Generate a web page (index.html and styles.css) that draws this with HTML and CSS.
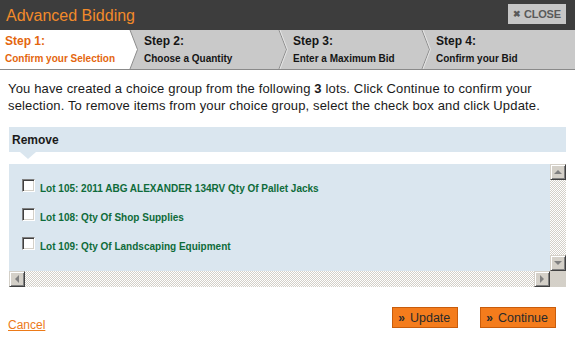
FILE: index.html
```html
<!DOCTYPE html>
<html>
<head>
<meta charset="utf-8">
<link rel="stylesheet" href="styles.css">
</head>
<body>
<div class="dialog">
  <div class="titlebar">
    <span class="title">Advanced Bidding</span>
    <span class="close"><span class="x">✖</span> CLOSE</span>
  </div>
  <div class="steps">
    <div class="step step1 active"><div class="st">Step 1:</div><div class="sd">Confirm your Selection</div></div>
    <svg class="chev chev-first" width="10" height="39" viewBox="0 0 10 39"><polygon points="0,0 1,0 8.5,19.5 1,39 0,39" fill="#fff"/><polyline points="1,0 8.5,19.5 1,39" fill="none" stroke="#8c8c8c" stroke-width="1"/></svg>
    <div class="step step2"><div class="st">Step 2:</div><div class="sd">Choose a Quantity</div></div>
    <svg class="chev" width="10" height="39" viewBox="0 0 10 39"><polyline points="1,0 8.5,19.5 1,39" fill="none" stroke="#8c8c8c" stroke-width="1"/><polyline points="2,0 9.5,19.5 2,39" fill="none" stroke="#e4e4e4" stroke-width="1"/></svg>
    <div class="step step3"><div class="st">Step 3:</div><div class="sd">Enter a Maximum Bid</div></div>
    <svg class="chev" width="10" height="39" viewBox="0 0 10 39"><polyline points="1,0 8.5,19.5 1,39" fill="none" stroke="#8c8c8c" stroke-width="1"/><polyline points="2,0 9.5,19.5 2,39" fill="none" stroke="#e4e4e4" stroke-width="1"/></svg>
    <div class="step step4"><div class="st">Step 4:</div><div class="sd">Confirm your Bid</div></div>
  </div>
  <p class="intro">You have created a choice group from the following <b>3</b> lots. Click Continue to confirm your selection. To remove items from your choice group, select the check box and click Update.</p>
  <div class="remove-head">Remove</div>
  <div class="list">
    <div class="list-body">
      <div class="row"><span class="cb"></span><span class="lot">Lot 105: 2011 ABG ALEXANDER 134RV Qty Of Pallet Jacks</span></div>
      <div class="row"><span class="cb"></span><span class="lot">Lot 108: Qty Of Shop Supplies</span></div>
      <div class="row"><span class="cb"></span><span class="lot">Lot 109: Qty Of Landscaping Equipment</span></div>
    </div>
    <div class="vscroll">
      <span class="sbtn"><span class="arr up"></span></span>
      <span class="track"></span>
      <span class="sbtn"><span class="arr down"></span></span>
    </div>
    <div class="hscroll">
      <span class="sbtn"><span class="arr left"></span></span>
      <span class="track"></span>
      <span class="sbtn"><span class="arr right"></span></span>
    </div>
    <div class="corner"></div>
  </div>
  <div class="footer">
    <a class="cancel" href="#">Cancel</a>
    <div class="buttons">
      <span class="btn"><b>»</b>Update</span>
      <span class="btn"><b>»</b>Continue</span>
    </div>
  </div>
</div>
</body>
</html>
```
FILE: styles.css
```css
html, body {
  margin: 0;
  padding: 0;
  background: #fff;
}
body {
  font-family: "Liberation Sans", Arial, sans-serif;
  width: 575px;
  height: 337px;
  overflow: hidden;
}
.titlebar {
  height: 30px;
  background: #3d3d3d;
  display: flex;
  align-items: center;
  justify-content: space-between;
  padding: 0 9px 0 6px;
}
.title {
  color: #f28a2a;
  font-size: 16px;
  margin-top: 1px;
}
.close {
  background: #c6c6c6;
  color: #5a5a5a;
  font-size: 11px;
  font-weight: bold;
  height: 20px;
  width: 58px;
  display: flex;
  align-items: center;
  justify-content: center;
  margin-top: -2px;
  letter-spacing: -0.2px;
}
.close .x {
  font-size: 9px;
  margin-right: 3px;
}
.steps {
  height: 39px;
  display: flex;
  background: #c9c9c9;
  border-bottom: 1px solid #8a8a8a;
}
.chev {
  flex: none;
  display: block;
}
.step {
  padding: 3px 0 0 5px;
  color: #151515;
  font-weight: bold;
  box-sizing: border-box;
}
.step1 { width: 129px; background: #fff; }
.step2 { width: 139px; }
.step3 { width: 133px; }
.step4 { flex: 1; }
.step.active { color: #e4660e; }
.st {
  font-size: 12px;
  line-height: 17px;
}
.sd {
  font-size: 10px;
  line-height: 12px;
  margin-top: 3px;
  white-space: nowrap;
}
.intro {
  margin: 10px 8px 0;
  font-size: 13px;
  letter-spacing: 0.15px;
  line-height: 17px;
  color: #1a1a1a;
}
.remove-head {
  position: relative;
  margin: 13px 9px 0;
  height: 25px;
  background: #dae6ef;
  font-size: 12px;
  font-weight: bold;
  color: #1a1a1a;
  padding-left: 3px;
  line-height: 26px;
}
.remove-head::after {
  content: "";
  position: absolute;
  left: 11px;
  bottom: -7px;
  border-left: 8px solid transparent;
  border-right: 8px solid transparent;
  border-top: 7px solid #dae6ef;
}
.list {
  margin: 12px 9px 0;
  height: 123px;
  display: grid;
  grid-template-columns: 1fr 16px;
  grid-template-rows: 1fr 16px;
}
.list-body {
  background: #dae6ef;
  padding: 10px 0 0 13px;
}
.row {
  height: 29px;
  display: flex;
  align-items: center;
}
.cb {
  width: 11px;
  height: 11px;
  background: #fff;
  border: 1px solid;
  border-color: #808080 #fff #fff #808080;
  box-shadow: inset 1px 1px #404040, inset -1px -1px #d4d0c8;
  margin-right: 5px;
  margin-top: -6px;
  flex: none;
}
.lot {
  color: #0e6b3a;
  font-size: 10px;
  font-weight: bold;
  white-space: nowrap;
}
.vscroll {
  display: flex;
  flex-direction: column;
}
.hscroll {
  display: flex;
}
.track {
  flex: 1;
  background: repeating-conic-gradient(#d4d0c8 0 25%, #fff 0 50%) 0 0 / 2px 2px;
}
.sbtn {
  width: 16px;
  height: 16px;
  box-sizing: border-box;
  background: #d4d0c8;
  border: 1px solid;
  border-color: #d4d0c8 #404040 #404040 #d4d0c8;
  box-shadow: inset 1px 1px #fff, inset -1px -1px #808080;
  display: flex;
  align-items: center;
  justify-content: center;
  flex: none;
}
.arr {
  width: 0;
  height: 0;
}
.arr.up { border-left: 4px solid transparent; border-right: 4px solid transparent; border-bottom: 4px solid #808080; }
.arr.down { border-left: 4px solid transparent; border-right: 4px solid transparent; border-top: 4px solid #808080; }
.arr.left { border-top: 4px solid transparent; border-bottom: 4px solid transparent; border-right: 4px solid #808080; }
.arr.right { border-top: 4px solid transparent; border-bottom: 4px solid transparent; border-left: 4px solid #808080; }
.corner {
  background: #d4d0c8;
}
.footer {
  display: flex;
  justify-content: space-between;
  align-items: flex-start;
  padding: 20px 19px 0 8px;
}
.cancel {
  margin-top: 11px;
  color: #ec7a18;
  font-size: 12px;
  line-height: 14px;
}
.buttons {
  display: flex;
  gap: 22px;
}
.btn {
  height: 21px;
  box-sizing: border-box;
  background: #f47c1c;
  border: 1px solid #c85c0c;
  color: #2a2a2a;
  font-size: 12.5px;
  display: flex;
  align-items: center;
  padding: 0 7px 0 5px;
}
.btn b {
  font-size: 12px;
  margin-right: 5px;
}
```
